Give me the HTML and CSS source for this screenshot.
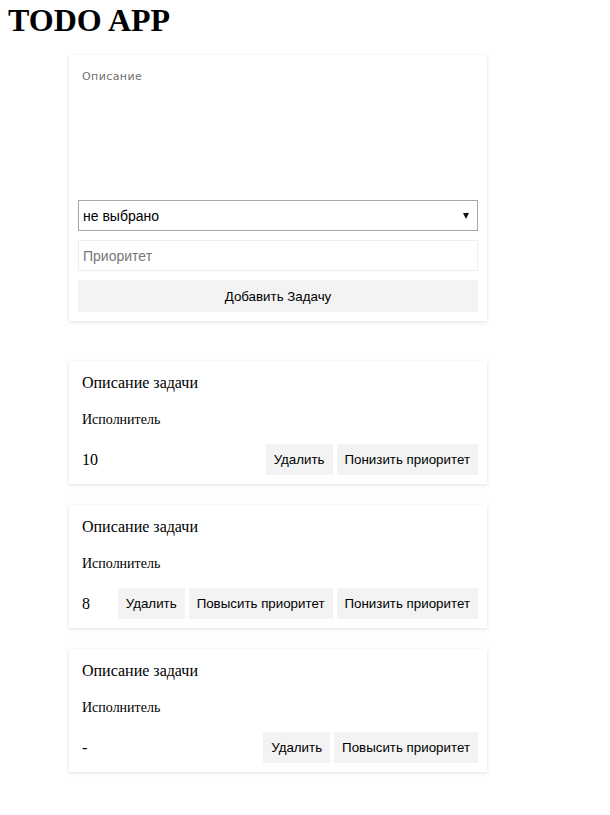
FILE: index.html
```html
<!DOCTYPE html>
<html lang="ru">
<head>
<meta charset="utf-8">
<title>TODO APP</title>
<link rel="stylesheet" href="styles.css">
</head>
<body>
<h1 class="app-title">TODO APP</h1>
<div class="board">
  <form class="card form-card">
    <textarea class="field-desc" placeholder="Описание"></textarea>
    <div class="select-wrap">
      <select class="field-select">
        <option>не выбрано</option>
      </select>
    </div>
    <input class="field-input" type="text" placeholder="Приоритет">
    <button class="btn btn-wide" type="button">Добавить Задачу</button>
  </form>

  <div class="task-list">
    <div class="card task">
      <div class="task-title">Описание задачи</div>
      <div class="task-owner">Исполнитель</div>
      <div class="task-row">
        <span class="task-prio">10</span>
        <div class="task-actions">
          <button class="btn" type="button">Удалить</button>
          <button class="btn" type="button">Понизить приоритет</button>
        </div>
      </div>
    </div>
    <div class="card task">
      <div class="task-title">Описание задачи</div>
      <div class="task-owner">Исполнитель</div>
      <div class="task-row">
        <span class="task-prio">8</span>
        <div class="task-actions">
          <button class="btn" type="button">Удалить</button>
          <button class="btn" type="button">Повысить приоритет</button>
          <button class="btn" type="button">Понизить приоритет</button>
        </div>
      </div>
    </div>
    <div class="card task">
      <div class="task-title">Описание задачи</div>
      <div class="task-owner">Исполнитель</div>
      <div class="task-row">
        <span class="task-prio">-</span>
        <div class="task-actions">
          <button class="btn" type="button">Удалить</button>
          <button class="btn" type="button">Повысить приоритет</button>
        </div>
      </div>
    </div>
  </div>
</div>
</body>
</html>
```

FILE: styles.css
```css
html, body {
  background: #fff;
}
body {
  margin: 0;
  padding: 0 8px 40px;
  font-family: "Liberation Serif", "Times New Roman", serif;
  color: #000;
}
.app-title {
  margin: 2px 0 0;
  font-size: 32px;
  font-weight: bold;
  line-height: normal;
}
.board {
  width: 418px;
  margin: 16px 0 0 61px;
}
.card {
  box-sizing: border-box;
  background: #fff;
  padding: 9px;
  box-shadow: 0 1px 4px rgba(0, 0, 0, 0.13);
}
.form-card {
  display: flex;
  flex-direction: column;
  gap: 9px;
  margin: 0;
}
.field-desc {
  box-sizing: border-box;
  display: block;
  width: 100%;
  height: 127px;
  border: none;
  outline: none;
  resize: none;
  padding: 6px 4px;
  font-family: "DejaVu Sans", sans-serif;
  font-size: 11px;
  letter-spacing: 0.4px;
  margin: 0;
}
.field-desc::placeholder {
  color: #707070;
}
.select-wrap {
  position: relative;
}
.select-wrap::after {
  content: "";
  position: absolute;
  right: 9px;
  top: 13px;
  border-left: 3.5px solid transparent;
  border-right: 3.5px solid transparent;
  border-top: 6px solid #111;
  pointer-events: none;
}
.field-select {
  box-sizing: border-box;
  display: block;
  width: 100%;
  height: 31px;
  margin: 0;
  padding: 0 4px;
  appearance: none;
  -webkit-appearance: none;
  background: #fff;
  border: 1px solid #a6a6a6;
  border-radius: 0;
  font-family: "Liberation Sans", Arial, sans-serif;
  font-size: 14px;
  color: #000;
}
.field-input {
  box-sizing: border-box;
  display: block;
  width: 100%;
  height: 31px;
  margin: 0;
  padding: 0 4px;
  border: 1px solid #eeeeee;
  outline: none;
  font-family: "Liberation Sans", Arial, sans-serif;
  font-size: 14px;
}
.field-input::placeholder {
  color: #777;
}
.btn {
  box-sizing: border-box;
  height: 31px;
  margin: 0;
  padding: 0 8px;
  border: none;
  border-radius: 0;
  background: #f3f3f3;
  font-family: "Liberation Sans", Arial, sans-serif;
  font-size: 13.333px;
  color: #000;
}
.btn-wide {
  width: 100%;
  height: 32px;
}
.task-list {
  display: flex;
  flex-direction: column;
  gap: 21px;
  margin-top: 40px;
}
.task-title {
  margin: 4px 4px 0;
  font-size: 16px;
}
.task-owner {
  margin: 20px 4px 0;
  font-size: 14px;
}
.task-row {
  display: flex;
  align-items: center;
  justify-content: space-between;
  margin-top: 16px;
}
.task-prio {
  padding-left: 4px;
  font-size: 16px;
}
.task-actions {
  display: flex;
  gap: 4px;
}
```
